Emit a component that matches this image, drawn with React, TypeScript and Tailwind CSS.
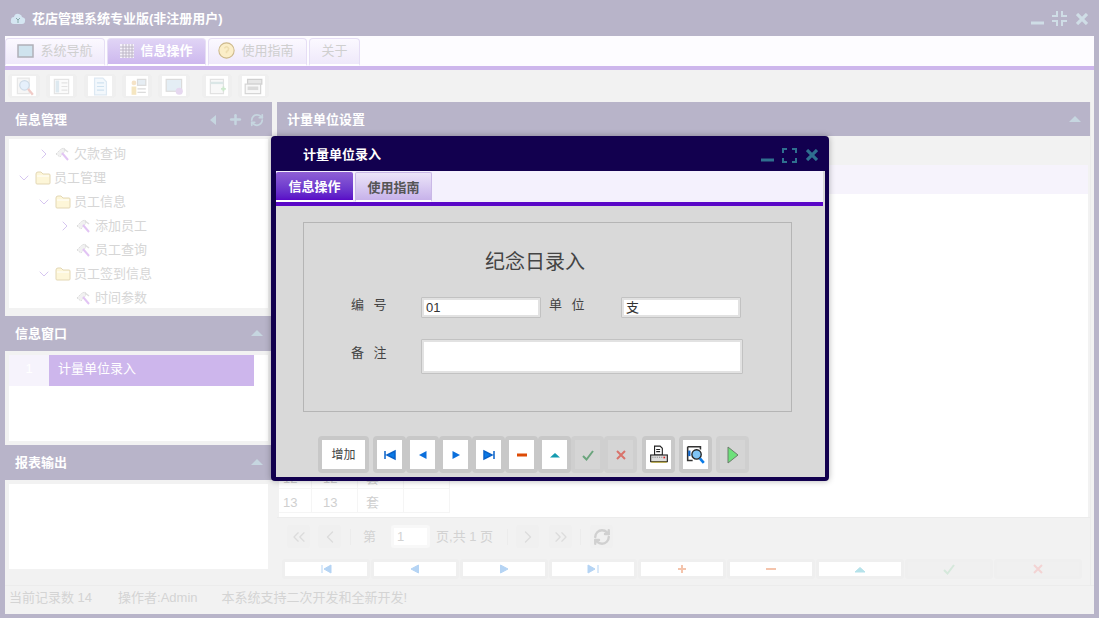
import { ChevronRight, ChevronDown, ChevronLeft, ChevronsLeft, ChevronsRight, Plus, RefreshCw } from "lucide-react";
import type { ReactNode } from "react";

function Tri({ dir, color }: { dir: "up" | "left" | "right"; color: string }) {
  const pts = dir === "up" ? "1,9 7,3 13,9" : dir === "left" ? "9,2 3,7 9,12" : "5,2 11,7 5,12";
  return (
    <svg width="14" height="14" viewBox="0 0 14 14">
      <polygon points={pts} fill={color} />
    </svg>
  );
}

function Folder() {
  return (
    <svg width="16" height="14" viewBox="0 0 16 14">
      <path d="M1 3 Q1 1 3 1 H6 L8 3 H14 Q15 3 15 4 V12 Q15 13 14 13 H2 Q1 13 1 12 Z" fill="#fdf6d8" stroke="#e3d7b4" />
      <path d="M2 5 H14" stroke="#fff" />
    </svg>
  );
}

function Tool() {
  return (
    <svg width="15" height="15" viewBox="0 0 15 15">
      <path d="M1 7 L6 2 L9 1 L10 4 L5 10 Z" fill="#f1f1f1" stroke="#dcdcdc" strokeDasharray="1.5 1" />
      <path d="M7 6 L13 13" stroke="#e2c4f4" strokeWidth="2" />
      <path d="M9 2 L13 5" stroke="#dedede" strokeWidth="1.5" />
    </svg>
  );
}

function WinButtons({ color, restore }: { color: string; restore?: boolean }) {
  return (
    <span className="flex items-center">
      <svg width="13" height="15" viewBox="0 0 13 15">
        <path d="M0 12 H13" stroke={color} strokeWidth="3" />
      </svg>
      <svg width="15" height="15" viewBox="0 0 15 15" fill="none" stroke={color} strokeWidth="2" className="ml-2">
        {restore ? (
          <path d="M5 0 V5 H0 M10 0 V5 H15 M15 10 H10 V15 M5 15 V10 H0" />
        ) : (
          <path d="M1 5 V1 H5 M10 1 H14 V5 M14 10 V14 H10 M5 14 H1 V10" />
        )}
      </svg>
      <svg width="12" height="12" viewBox="0 0 12 12" stroke={color} strokeWidth="3.2" className="ml-[9px]">
        <path d="M1 1 L11 11 M11 1 L1 11" />
      </svg>
    </span>
  );
}

type Node = { label: string; indent: number; arrow?: "right" | "down"; kind: "folder" | "tool" };
const tree: Node[] = [
  { label: "欠款查询", indent: 37, arrow: "right", kind: "tool" },
  { label: "员工管理", indent: 17, arrow: "down", kind: "folder" },
  { label: "员工信息", indent: 37, arrow: "down", kind: "folder" },
  { label: "添加员工", indent: 58, arrow: "right", kind: "tool" },
  { label: "员工查询", indent: 58, kind: "tool" },
  { label: "员工签到信息", indent: 37, arrow: "down", kind: "folder" },
  { label: "时间参数", indent: 58, kind: "tool" },
];

function TreeRow({ n }: { n: Node }) {
  return (
    <div className="flex h-6 items-center text-[13px] text-[#d6d6d6]" style={{ paddingLeft: n.indent - 16 }}>
      <span className="flex w-[14px] items-center justify-center">
        {n.arrow === "right" && <ChevronRight size={16} strokeWidth={1.5} color="#d6c6f0" className="shrink-0" />}
        {n.arrow === "down" && <ChevronDown size={16} strokeWidth={1.5} color="#d6c6f0" className="shrink-0" />}
      </span>
      <span className="ml-1 mr-[3px] flex w-4 items-center">{n.kind === "folder" ? <Folder /> : <Tool />}</span>
      {n.label}
    </div>
  );
}

function PanelHead({ title, tall, children }: { title: string; tall?: boolean; children?: ReactNode }) {
  return (
    <div className={`flex items-center justify-between bg-[#b8b4c9] pl-[10px] pr-2 pt-px text-[13px] font-bold text-white ${tall ? "h-[35px]" : "h-[34px]"}`}>
      {title}
      <span className="flex items-center gap-[7px]">{children}</span>
    </div>
  );
}

function TopTab({ label, active, w, icon }: { label: string; active?: boolean; w: number; icon?: ReactNode }) {
  return (
    <div
      className={`flex h-[28px] items-center justify-center gap-[6px] rounded-t-sm border border-b-2 border-[#e6def5] border-b-white pb-[2px] text-[13px] ${
        active ? "bg-gradient-to-b from-[#e0d4f5] to-[#cdb8ee] font-bold text-white" : "bg-gradient-to-b from-[#fbf9ff] to-[#efe9fa] text-[#cfcfcf]"
      }`}
      style={{ width: w }}
    >
      {icon}
      {label}
    </div>
  );
}

function ToolIcon({ w, children }: { w: number; children: ReactNode }) {
  return (
    <div className="flex h-6 items-center justify-center rounded-[4px] border-x-4 border-y-2 border-[#efefef] bg-white" style={{ width: w }}>
      {children}
    </div>
  );
}

const arrows = {
  first: <path d="M2 3 V11 M12 3 V11 L4 7 Z" stroke="#0a62c9" strokeWidth="1.5" fill="#0a7ae6" />,
  prev: <path d="M10.5 3 V11 L3 7 Z" fill="#0a6fdc" />,
  next: <path d="M3.5 3 V11 L11 7 Z" fill="#0a6fdc" />,
  last: <path d="M2 3 V11 L10 7 Z M12 3 V11" stroke="#0a62c9" strokeWidth="1.5" fill="#0a7ae6" />,
  minus: <path d="M2 7 H12" stroke="#dd4a05" strokeWidth="3" />,
  up: <path d="M2 9.5 L7 5 L12 9.5 Z" fill="#159bb0" />,
  check: <path d="M2 8 L5.5 11.5 L12 3" stroke="#6ba57d" strokeWidth="2" fill="none" />,
  cross: <path d="M3 3 L11 11 M11 3 L3 11" stroke="#d9736b" strokeWidth="2" fill="none" />,
};

function Glyph({ name }: { name: keyof typeof arrows }) {
  return (
    <svg width="14" height="14" viewBox="0 0 14 14">
      {arrows[name]}
    </svg>
  );
}

function DlgBtn({ w = 33, disabled, children }: { w?: number; disabled?: boolean; children: ReactNode }) {
  return (
    <div
      className={`flex h-[37px] shrink-0 items-center justify-center rounded-[4px] border-[4px] ${
        disabled ? "border-[#cfcfcf] bg-[#d5d5d5]" : "border-[#c8c8c8] bg-white"
      }`}
      style={{ width: w }}
    >
      {children}
    </div>
  );
}

function FormInput({ w, h, value }: { w: number; h: number; value?: string }) {
  return (
    <div className="shrink-0 rounded-[1px] border border-[#c2c2c2] bg-[#e2e2e2] p-[2px]" style={{ width: w, height: h }}>
      <div className="h-full bg-white pl-[2px] text-[13px] leading-[16px] text-[#333]">{value}</div>
    </div>
  );
}

function Dialog() {
  return (
    <div className="absolute left-[271px] top-[136px] flex h-[345px] w-[558px] flex-col rounded-[4px] bg-[#12004f] pb-[4px] pl-[5px] pr-[4px] shadow-[0_0_6px_rgba(0,0,0,0.3)]">
      <div className="flex h-[35px] shrink-0 items-center justify-between pl-[27px] pr-[7px] pt-[3px] text-[13px] font-bold text-white">
        计量单位录入
        <WinButtons color="#2f6f8f" />
      </div>
      <div className="flex flex-1 flex-col bg-[#d9d9d9]">
        <div className="mr-[2px] flex h-[35px] shrink-0 flex-col bg-[#f4f1fd]">
          <div className="flex h-[31px] items-end gap-[2px]">
            <div className="flex h-[30px] w-[77px] items-center justify-center rounded-t-[2px] border-b-2 border-white bg-gradient-to-b from-[#8f5fd5] to-[#5a07c7] pt-[2px] text-[13px] font-bold text-white">
              信息操作
            </div>
            <div className="flex h-[30px] w-[77px] items-center justify-center rounded-t-[2px] border border-b-2 border-[#c9b8e6] border-b-white bg-gradient-to-b from-[#ece5f8] to-[#c7b2ea] pt-[2px] text-[13px] font-bold text-[#555]">
              使用指南
            </div>
          </div>
          <div className="h-[4px] bg-[#5a07c7]" />
        </div>
        <div className="flex flex-1 flex-col pl-[27px]">
          <div className="mt-[16px] h-[190px] w-[489px] border border-[#b5b5b5] pl-[47px] pt-[26px] text-[13px] text-[#444]">
            <div className="pl-[134px] text-[20px] leading-[26px] text-[#444]">纪念日录入</div>
            <div className="mt-[22px] flex items-start">
              <span className="-mt-[2px] w-[70px] whitespace-pre leading-[20px] tracking-[3px]">编 号</span>
              <FormInput w={120} h={21} value="01" />
              <span className="-mt-[2px] ml-[8px] w-[72px] whitespace-pre leading-[20px] tracking-[3px]">单 位</span>
              <FormInput w={120} h={21} value="支" />
            </div>
            <div className="mt-[21px] flex items-start">
              <span className="mt-[4px] w-[70px] whitespace-pre leading-[20px] tracking-[3px]">备 注</span>
              <FormInput w={322} h={35} />
            </div>
          </div>
          <div className="ml-[15px] mt-[24px] flex items-center">
            <DlgBtn w={51}>
              <span className="text-[12px] text-[#444]">增加</span>
            </DlgBtn>
            <div className="ml-[4px] flex gap-0">
              {(["first", "prev", "next", "last", "minus", "up"] as const).map((g) => (
                <DlgBtn key={g}>
                  <Glyph name={g} />
                </DlgBtn>
              ))}
              <DlgBtn disabled>
                <Glyph name="check" />
              </DlgBtn>
              <DlgBtn disabled>
                <Glyph name="cross" />
              </DlgBtn>
            </div>
            <div className="ml-[5px] flex gap-[4px]">
              <DlgBtn>
                <svg width="20" height="20" viewBox="0 0 18 18">
                  <path d="M5 1 H10 L12 3 V9 H5 Z" fill="#fff" stroke="#222" />
                  <path d="M6.5 4 H10 M6.5 6 H10" stroke="#222" />
                  <rect x="1.5" y="9" width="15" height="6" fill="#ddd" stroke="#222" />
                  <path d="M3 11 H13" stroke="#888" strokeDasharray="1 1" />
                  <rect x="13" y="10.5" width="1.5" height="1.5" fill="#d22" />
                  <path d="M2 15.5 H16" stroke="#b9a63a" />
                </svg>
              </DlgBtn>
              <DlgBtn>
                <svg width="20" height="20" viewBox="0 0 18 18">
                  <path d="M1.5 1.5 H13 V4 M1.5 1.5 V14 H6" fill="none" stroke="#333" strokeWidth="1.4" />
                  <path d="M3 5 V10" stroke="#0a62c9" strokeWidth="2" />
                  <circle cx="9.5" cy="8.5" r="4.2" fill="#7fc4f5" stroke="#222" strokeWidth="1.2" />
                  <path d="M12.5 12 L16 16" stroke="#0a7ae6" strokeWidth="2.4" />
                </svg>
              </DlgBtn>
              <DlgBtn disabled>
                <svg width="14" height="18" viewBox="0 0 14 18">
                  <path d="M2 1 V17 L12 9 Z" fill="#6de07a" stroke="#6b7c6b" />
                </svg>
              </DlgBtn>
            </div>
          </div>
        </div>
      </div>
    </div>
  );
}

function FadedIcon({ children }: { children: ReactNode }) {
  return (
    <svg width="19" height="19" viewBox="0 0 16 16" className="opacity-70">
      {children}
    </svg>
  );
}

const toolbar: { w: number; gap: number; icon: ReactNode }[] = [
  {
    w: 32,
    gap: 6,
    icon: (
      <FadedIcon>
        <path d="M2 1 H12 V14 H2 Z" fill="#f3f3f3" stroke="#ddd" />
        <circle cx="8" cy="7" r="4" fill="#dcebfa" stroke="#bcd" />
        <path d="M11 10 L15 15" stroke="#eab6b0" strokeWidth="2" />
      </FadedIcon>
    ),
  },
  {
    w: 31,
    gap: 7,
    icon: (
      <FadedIcon>
        <rect x="2" y="2" width="12" height="12" fill="#fafafa" stroke="#d8d8d8" />
        <rect x="3" y="3" width="3" height="10" fill="#cfe0ea" />
        <path d="M8 5 H13 M8 8 H13 M8 11 H13" stroke="#d8d8d8" />
      </FadedIcon>
    ),
  },
  {
    w: 32,
    gap: 6,
    icon: (
      <FadedIcon>
        <path d="M3 1 H10 L13 4 V15 H3 Z" fill="#eef6fc" stroke="#cfe0ee" />
        <path d="M5 5 H11 M5 8 H11 M5 11 H11" stroke="#bcd6ea" />
      </FadedIcon>
    ),
  },
  {
    w: 30,
    gap: 6,
    icon: (
      <FadedIcon>
        <circle cx="5" cy="5" r="2" fill="#f2d8b0" />
        <path d="M3 8 H7 V15 H3 Z" fill="#f2dca8" />
        <rect x="8" y="2" width="7" height="5" fill="#dce6ee" stroke="#ccc" />
        <path d="M8 10 H15 M8 13 H15" stroke="#ccc" />
      </FadedIcon>
    ),
  },
  {
    w: 32,
    gap: 12,
    icon: (
      <FadedIcon>
        <rect x="1" y="2" width="13" height="10" fill="#d9e8f2" stroke="#ccc" />
        <circle cx="12" cy="12" r="3" fill="#dcc8ea" />
      </FadedIcon>
    ),
  },
  {
    w: 30,
    gap: 6,
    icon: (
      <FadedIcon>
        <rect x="2" y="2" width="11" height="12" fill="#f6f6f6" stroke="#d5d5d5" />
        <path d="M2 5 H13" stroke="#cdd" strokeWidth="2" />
        <path d="M11 10 H15 M13 8 V12" stroke="#b9e0b9" strokeWidth="1.5" />
      </FadedIcon>
    ),
  },
  {
    w: 31,
    gap: 0,
    icon: (
      <FadedIcon>
        <rect x="3" y="2" width="12" height="4" fill="#ddd" stroke="#bbb" />
        <rect x="1" y="6" width="13" height="8" fill="#f6f6f6" stroke="#c4c4c4" />
        <rect x="3" y="8" width="9" height="3" fill="#ccc" />
      </FadedIcon>
    ),
  },
];

function Faded({ c, d, stroke }: { c: string; d: string; stroke?: boolean }) {
  return (
    <svg width="14" height="14" viewBox="0 0 14 14">
      <path d={d} fill={stroke ? "none" : c} stroke={c} strokeWidth={stroke ? 2 : 1} />
    </svg>
  );
}

const footerBtns = [
  { g: <Faded c="#b5d4f4" d="M3 3 V11 M12 3 V11 L5 7 Z" />, off: false },
  { g: <Faded c="#b5d4f4" d="M10.5 3 V11 L3 7 Z" />, off: false },
  { g: <Faded c="#b5d4f4" d="M3.5 3 V11 L11 7 Z" />, off: false },
  { g: <Faded c="#b5d4f4" d="M2 3 V11 L9 7 Z M12 3 V11" />, off: false },
  { g: <Faded c="#f4c4ac" d="M7 3 V11 M3 7 H11" stroke />, off: false },
  { g: <Faded c="#f4c4ac" d="M2 7 H12" stroke />, off: false },
  { g: <Faded c="#b5e2ea" d="M2 10 L7 5.5 L12 10 Z" />, off: false },
  { g: <Faded c="#d5e8db" d="M2 8 L5.5 11.5 L12 3" stroke />, off: true },
  { g: <Faded c="#f3d3d3" d="M3 3 L11 11 M11 3 L3 11" stroke />, off: true },
];

function Row({ a }: { a: string }) {
  return (
    <div className="flex h-6 w-[171px] border-b border-[#f5f5f5] text-[13px] leading-[28px] text-[#cfcfcf]">
      <div className="w-[33px] border-r border-[#f5f5f5] pl-[4px]">{a}</div>
      <div className="w-[46px] border-r border-[#f5f5f5] pl-[11px]">{a}</div>
      <div className="w-[46px] border-r border-[#f5f5f5] pl-[8px]">套</div>
      <div className="w-[46px] border-r border-[#f5f5f5]" />
    </div>
  );
}

function PageBox({ children }: { children: ReactNode }) {
  return <span className="flex h-[23px] w-[23px] shrink-0 items-center justify-center rounded-[3px] bg-[#f0f0f0]">{children}</span>;
}

function Sep({ ml }: { ml: number }) {
  return <span className="h-[16px] w-px shrink-0 bg-[#ececec]" style={{ marginLeft: ml }} />;
}

export default function App() {
  return (
    <div className="relative flex h-[618px] w-[1099px] flex-col overflow-hidden bg-[#b8b4c9] font-[family-name:'Liberation_Sans','Noto_Sans_CJK_SC',sans-serif]">
      <div className="flex h-9 shrink-0 items-center justify-between pl-[10px] pr-[11px] pt-px">
        <div className="flex items-center gap-[6px] text-[13px] font-bold text-white">
          <svg width="16" height="14" viewBox="0 0 16 14">
            <path d="M4 12 Q0 12 1 8 Q1 5 4 5 Q5 1 9 2 Q12 3 12 5 Q16 6 15 9 Q15 12 12 12 Z" fill="#d5e6f2" />
            <path d="M6 6 L8 8 L10 6 M8 8 V11" stroke="#8aa" strokeWidth="1" fill="none" />
          </svg>
          花店管理系统专业版(非注册用户)
        </div>
        <WinButtons color="#cfdde6" restore />
      </div>

      <div className="mx-[5px] flex h-[578px] flex-col bg-[#f2f2f2]">
        <div className="h-[34px] shrink-0 border-b-4 border-[#cdb6ec] bg-[#fdfcff]">
          <div className="flex h-[30px] items-end gap-[2px]">
            <TopTab
              label="系统导航"
              w={100}
              icon={
                <svg width="17" height="14" viewBox="0 0 17 14">
                  <rect x="1" y="1" width="15" height="12" fill="#cfe3ee" stroke="#b0b0b8" strokeWidth="1.5" />
                </svg>
              }
            />
            <TopTab
              label="信息操作"
              w={99}
              active
              icon={
                <svg width="14" height="14" viewBox="0 0 14 14">
                  <rect width="14" height="14" fill="#f6f2fb" />
                  <path d="M3 0 V14 M6 0 V14 M9 0 V14 M12 0 V14 M0 3 H14 M0 6 H14 M0 9 H14 M0 12 H14" stroke="#bdb6c6" />
                </svg>
              }
            />
            <TopTab
              label="使用指南"
              w={99}
              icon={
                <svg width="17" height="17" viewBox="0 0 16 16" className="-ml-[3px]">
                  <circle cx="8" cy="8" r="7.2" fill="#fbeec8" stroke="#cdb98c" />
                  <path d="M6 6 Q8 3 10 6 Q10 8 8 9 V10.5" fill="none" stroke="#eeddb0" strokeWidth="1.5" />
                </svg>
              }
            />
            <TopTab label="关于" w={51} />
          </div>
        </div>

        <div className="flex h-8 shrink-0 items-center pl-[3px]">
          {toolbar.map((t, i) => (
            <div key={i} style={{ marginRight: t.gap }}>
              <ToolIcon w={t.w}>{t.icon}</ToolIcon>
            </div>
          ))}
        </div>

        <div className="flex flex-1 gap-[5px]">
          <div className="flex w-[267px] shrink-0 flex-col">
            <PanelHead title="信息管理">
              <Tri dir="left" color="#c6d6e0" />
              <Plus size={15} strokeWidth={4} color="#c6d6e0" />
              <RefreshCw size={14} strokeWidth={3} color="#c6d6e0" />
            </PanelHead>
            <div className="mx-[4px] mt-[3px] h-[169px] overflow-hidden bg-white pl-[7px] pt-[3px]">
              {tree.map((n) => (
                <TreeRow key={n.label} n={n} />
              ))}
            </div>
            <div className="mt-[8px]">
              <PanelHead title="信息窗口" tall>
                <Tri dir="up" color="#c6d6e0" />
              </PanelHead>
            </div>
            <div className="mx-[4px] mt-[4px] h-[86px] bg-white">
              <div className="flex h-[31px] w-[245px] text-[13px] text-white">
                <div className="flex w-[40px] items-center justify-center bg-[#f6f3fc] pb-[3px]">1</div>
                <div className="flex flex-1 items-center bg-[#cdb6ec] pb-[3px] pl-[9px]">计量单位录入</div>
              </div>
            </div>
            <div className="mt-[4px]">
              <PanelHead title="报表输出" tall>
                <Tri dir="up" color="#c6d6e0" />
              </PanelHead>
            </div>
            <div className="mx-[4px] mt-[4px] h-[85px] bg-white" />
          </div>

          <div className="mr-[3px] flex flex-1 flex-col border-r border-[#ececec]">
            <PanelHead title="计量单位设置">
              <Tri dir="up" color="#c6d6e0" />
            </PanelHead>
            <div className="mx-[2px] mt-[29px] h-[29px] shrink-0 bg-[#f6f3fc]" />
            <div className="mx-[2px] flex h-[323px] shrink-0 flex-col justify-end bg-white pb-[4px]">
              <Row a="12" />
              <Row a="13" />
            </div>
            <div className="flex h-[38px] shrink-0 items-center border-t border-[#ececec] pl-[10px] text-[13px] text-[#d2d2d2]">
              <PageBox>
                <ChevronsLeft size={20} color="#dcdcdc" strokeWidth={1.6} />
              </PageBox>
              <span className="ml-[8px]">
                <PageBox>
                  <ChevronLeft size={20} color="#dcdcdc" strokeWidth={1.6} />
                </PageBox>
              </span>
              <Sep ml={9} />
              <span className="ml-[12px]">第</span>
              <span className="ml-[15px] flex h-[23px] w-[39px] items-center rounded-[3px] border-[3px] border-[#f8f8f8] bg-white pl-[3px] text-[13px]">1</span>
              <span className="ml-[6px]">页,共 1 页</span>
              <Sep ml={14} />
              <span className="ml-[8px]">
                <PageBox>
                  <ChevronRight size={20} color="#dcdcdc" strokeWidth={1.6} />
                </PageBox>
              </span>
              <span className="ml-[10px]">
                <PageBox>
                  <ChevronsRight size={20} color="#dcdcdc" strokeWidth={1.6} />
                </PageBox>
              </span>
              <Sep ml={8} />
              <span className="ml-[9px]">
                <PageBox>
                  <RefreshCw size={18} color="#d0d0d0" strokeWidth={3.2} />
                </PageBox>
              </span>
            </div>
            <div className="mt-[4px] flex gap-[1px] pl-[5px]">
              {footerBtns.map((b, i) => (
                <div
                  key={i}
                  className={`flex h-[20px] w-[88px] items-center justify-center rounded-[3px] border-[3px] border-[#efefef] ${b.off ? "bg-[#f0f0f0]" : "bg-white"}`}
                >
                  {b.g}
                </div>
              ))}
            </div>
          </div>
        </div>

        <div className="flex h-[29px] shrink-0 items-center gap-[26px] border-t border-[#ececec] pb-[4px] pl-[4px] text-[13px] text-[#d4d4d4]">
          <span>当前记录数 14</span>
          <span>操作者:Admin</span>
          <span className="-ml-[2px]">本系统支持二次开发和全新开发!</span>
        </div>
      </div>

      <Dialog />
    </div>
  );
}
